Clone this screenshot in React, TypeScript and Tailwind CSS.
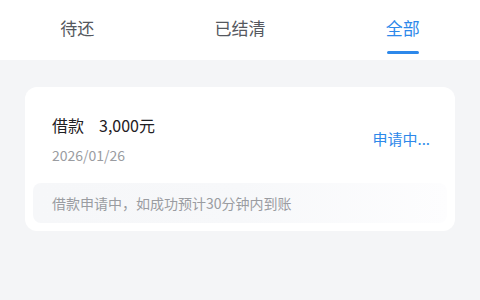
export default function App() {
  const tabs = ['待还', '已结清', '全部']
  const active = 2

  return (
    <div
      className="min-h-[300px] w-full bg-[#f4f5f7]"
      style={{ fontFamily: '"Noto Sans CJK SC", "Noto Sans", sans-serif' }}
    >
      <div className="flex h-[60px] justify-around bg-white">
        {tabs.map((t, i) => (
          <div key={t} className="relative flex flex-col items-center">
            <span
              className={
                'mt-[15px] text-[17px] leading-[26px] ' +
                (i === active ? 'text-[#2d88ea]' : 'text-[#55585e]')
              }
            >
              {t}
            </span>
            {i === active && (
              <span className="absolute top-[51px] h-[3px] w-[32px] rounded-full bg-[#2d88ea]" />
            )}
          </div>
        ))}
      </div>

      <div className="mx-[25px] mt-[27px] rounded-[12px] bg-white px-[8px] pb-[8px] pt-[26px]">
        <div className="flex items-center justify-between pl-[19px] pr-[17px]">
          <div>
            <div className="flex items-center text-[16px] leading-[24px] text-[#1f2023]">
              <span>借款</span>
              <span className="ml-[15px]">3,000元</span>
            </div>
            <div className="mt-[8px] text-[14px] leading-[20px] text-[#9a9ca1]">2026/01/26</div>
          </div>
          <div className="text-[15px] text-[#2d88ea]">申请中...</div>
        </div>

        <div className="mt-[18px] flex h-[40px] items-center rounded-[8px] bg-gradient-to-r from-[#f6f7f9] via-[#f7f8fa] to-[#fdfdfe] pl-[19px] text-[14px] text-[#9a9ca1]">
          借款申请中，如成功预计30分钟内到账
        </div>
      </div>
    </div>
  )
}
